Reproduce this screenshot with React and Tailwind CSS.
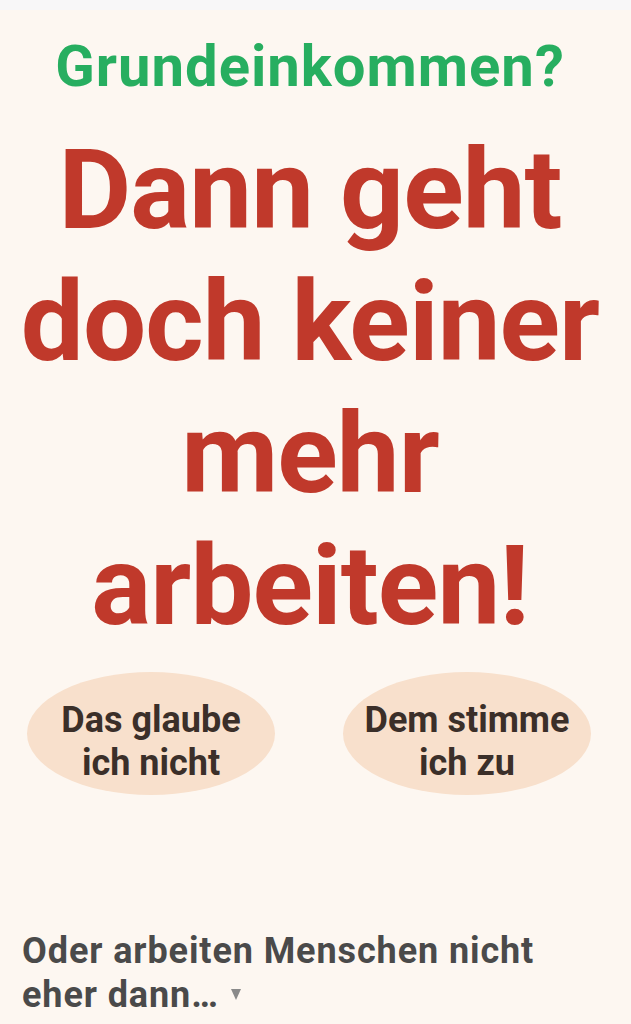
export default function App() {
  const font = { fontFamily: 'Roboto, "Liberation Sans", sans-serif' }
  return (
    <div className="min-h-[1024px] bg-[#fdf7f1] font-bold" style={font}>
      <div className="h-[10px] bg-[#f8f7f8]" />
      <div className="pt-[21px] pr-[11px] text-center">
        <h2 className="text-[58px] leading-[70px] text-[#27ae60] tracking-[1px]">Grundeinkommen?</h2>
        <h1 className="mt-[23px] text-[112px] leading-[132px] text-[#c0392b] tracking-[-0.9px]">
          Dann geht<br />doch keiner<br />mehr<br />arbeiten!
        </h1>
      </div>
      <div className="mt-[20px] flex justify-between pl-[27px] pr-[40px]">
        {['Das glaube|ich nicht', 'Dem stimme|ich zu'].map(t => (
          <button key={t} className="w-[248px] h-[123px] pt-[16px] rounded-[50%] bg-[#f8e0cc] text-[#3b2f29] text-[36px] leading-[43px] flex flex-col items-center justify-center">
            {t.split('|').map(l => <span key={l}>{l}</span>)}
          </button>
        ))}
      </div>
      <div className="mt-[134px] px-[22px] text-[36px] leading-[44px] tracking-[0.9px] text-[#4a4a4a]">
        Oder arbeiten Menschen nicht<br />eher dann…
        <svg className="inline-block ml-[12px] mb-[6px] align-middle" width="10" height="11" viewBox="0 0 10 11">
          <path d="M0 0H10L5 11Z" fill="#8a8a8a" />
        </svg>
      </div>
    </div>
  )
}
